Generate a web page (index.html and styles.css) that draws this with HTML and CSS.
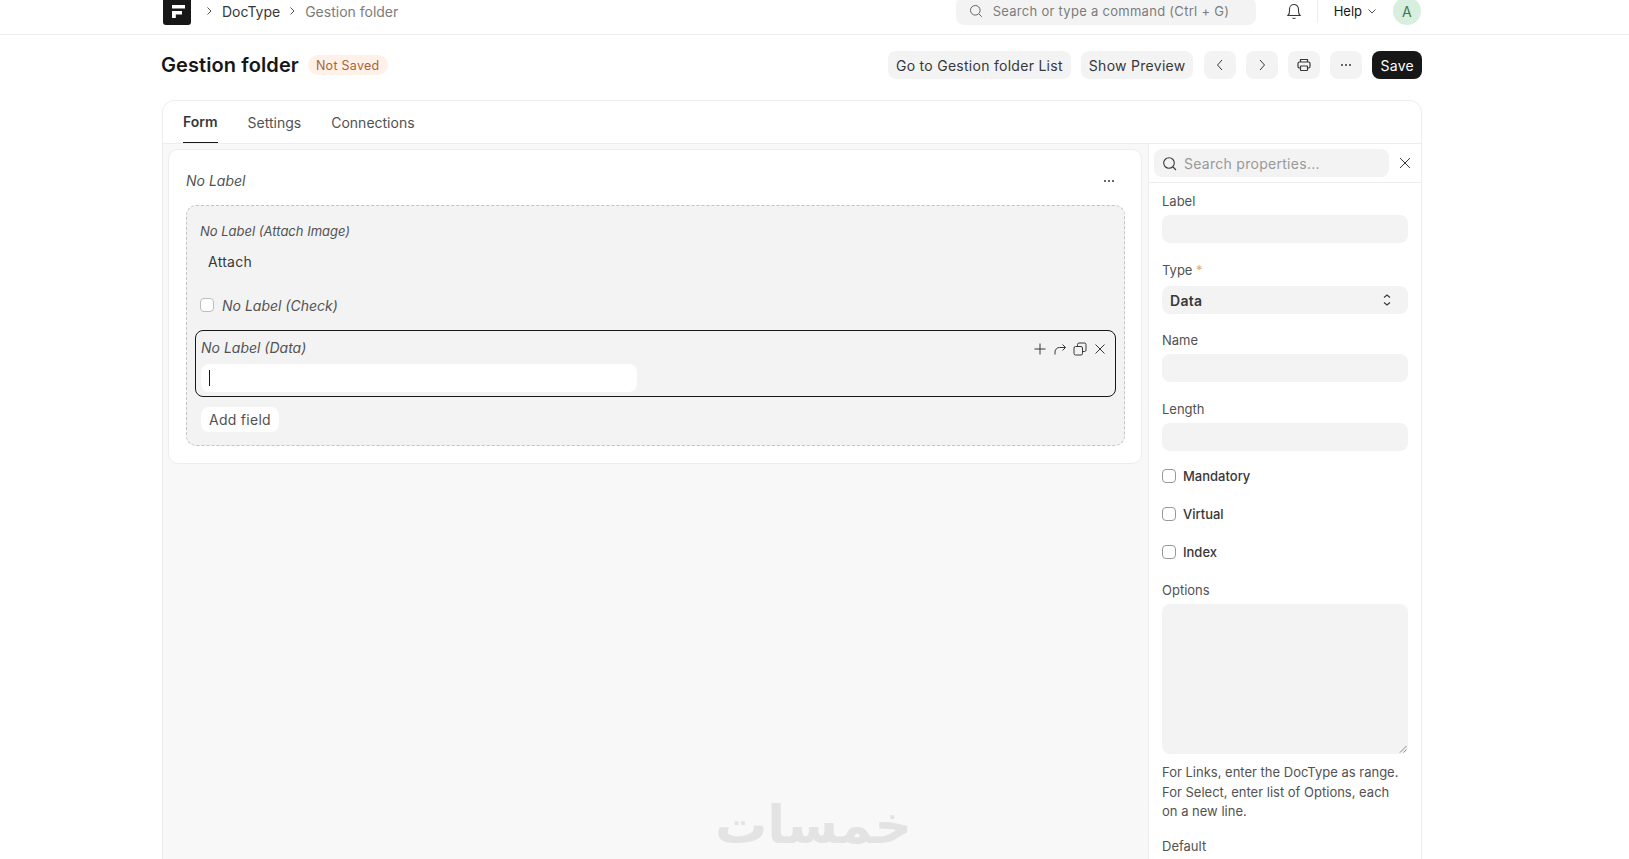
FILE: index.html
```html
<!DOCTYPE html>
<html lang="en">
<head>
  <meta charset="UTF-8">
  <title>Gestion folder</title>
  <link rel="stylesheet" href="styles.css">
</head>
<body>
  <!-- Top bar -->
  <header class="navbar">
    <div class="brand">
      <svg width="28" height="28" viewBox="0 0 28 28"><rect width="28" height="28" rx="3" fill="#171717"/><path d="M9 8h13v3.500H9zM9 14h10v3.500h-6.200V21H9z" fill="#fff"/></svg>
    </div>
    <nav class="crumbs">
      <svg class="crumb-sep" width="12" height="12" viewBox="0 0 12 12"><path d="M4.500 2.500 8 6l-3.500 3.500" fill="none" stroke="#525252"/></svg>
      <span class="crumb">DocType</span>
      <svg class="crumb-sep" width="12" height="12" viewBox="0 0 12 12"><path d="M4.500 2.500 8 6l-3.500 3.500" fill="none" stroke="#525252"/></svg>
      <span class="crumb crumb-current">Gestion folder</span>
    </nav>
    <div class="nav-right">
      <div class="nav-search">
        <svg width="14" height="14" viewBox="0 0 14 14" fill="none" stroke="#666"><circle cx="6.300" cy="6.300" r="4.800"/><path d="m10 10 2.800 2.800"/></svg>
        <span>Search or type a command (Ctrl + G)</span>
      </div>
      <svg class="bell" width="16" height="18" viewBox="0 0 16 18" fill="none" stroke="#383838" stroke-width="1.100"><path d="M2 13.500c1-1 1.500-2 1.500-4.500V7a4.500 4.500 0 0 1 9 0v2c0 2.500.5 3.500 1.500 4.500z"/><path d="M6.500 15.800c.8.700 2.200.7 3 0"/></svg>
      <span class="nav-divider"></span>
      <span class="help">Help</span>
      <svg class="help-caret" width="10" height="10" viewBox="0 0 10 10"><path d="m1.500 3.500 3.500 3.500 3.500-3.500" fill="none" stroke="#525252"/></svg>
      <div class="avatar">A</div>
    </div>
  </header>

  <main class="page">
    <!-- Title row -->
    <div class="page-head">
      <h1>Gestion folder</h1>
      <span class="badge">Not Saved</span>
      <div class="actions">
        <button class="btn">Go to Gestion folder List</button>
        <button class="btn btn-preview">Show Preview</button>
        <button class="btn btn-icon"><svg width="12" height="14" viewBox="0 0 12 14"><path d="M8 2 3.500 7 8 12" fill="none" stroke="#383838"/></svg></button>
        <button class="btn btn-icon"><svg width="12" height="14" viewBox="0 0 12 14"><path d="M4 2l4.500 5L4 12" fill="none" stroke="#383838"/></svg></button>
        <button class="btn btn-icon"><svg width="16" height="16" viewBox="0 0 16 16" fill="none" stroke="#383838" stroke-width="1.200"><path d="M4.500 5V2.500h7V5"/><rect x="2" y="5" width="12" height="6" rx="1.500"/><rect x="4.500" y="9" width="7" height="4.500" rx=".5" fill="#f3f3f3"/></svg></button>
        <button class="btn btn-icon"><svg width="12" height="4" viewBox="0 0 12 4" fill="#383838"><circle cx="2" cy="2" r="1"/><circle cx="6" cy="2" r="1"/><circle cx="10" cy="2" r="1"/></svg></button>
        <button class="btn btn-primary">Save</button>
      </div>
    </div>

    <div class="layout-card">
      <div class="tabs">
        <span class="tab tab-active">Form</span>
        <span class="tab">Settings</span>
        <span class="tab">Connections</span>
      </div>

      <div class="builder">
        <!-- Form canvas -->
        <section class="canvas">
          <div class="form-card">
            <div class="section-head">
              <span class="section-title">No Label</span>
              <svg width="12" height="4" viewBox="0 0 12 4" fill="#383838"><circle cx="2" cy="2" r="1"/><circle cx="6" cy="2" r="1"/><circle cx="10" cy="2" r="1"/></svg>
            </div>
            <div class="column">
              <div class="cf-label cf-attach-label">No Label (Attach Image)</div>
              <div class="cf-attach">Attach</div>
              <label class="cf-check"><span class="checkbox"></span><span class="cf-label-lg">No Label (Check)</span></label>
              <div class="cf-selected">
                <div class="cf-selected-head">
                  <span class="cf-label-lg">No Label (Data)</span>
                  <div class="cf-tools">
                    <svg width="14" height="14" viewBox="0 0 14 14" fill="none" stroke="#383838"><path d="M7 1.500v11M1.500 7h11"/></svg>
                    <svg width="14" height="14" viewBox="0 0 14 14" fill="none" stroke="#383838"><path d="M2 12.500V10a4.500 4.500 0 0 1 4.500-4.500H12.500M9.500 2.500l3 3-3 3"/></svg>
                    <svg width="14" height="14" viewBox="0 0 14 14" fill="none" stroke="#383838"><rect x="1" y="4.500" width="8.500" height="8.500" rx="1.500"/><path d="M4.500 4.500V2.500A1.500 1.500 0 0 1 6 1h6a1.500 1.500 0 0 1 1 1.500V8a1.500 1.500 0 0 1-1.500 1.500h-2"/></svg>
                    <svg width="14" height="14" viewBox="0 0 14 14" fill="none" stroke="#383838"><path d="m2.500 2.500 9 9m0-9-9 9"/></svg>
                  </div>
                </div>
                <div class="cf-input"><span class="caret"></span></div>
              </div>
              <button class="add-field">Add field</button>
            </div>
          </div>
        </section>

        <!-- Properties sidebar -->
        <aside class="sidebar">
          <div class="side-search">
            <div class="side-search-box">
              <svg width="15" height="15" viewBox="0 0 15 15" fill="none" stroke="#383838" stroke-width="1.100"><circle cx="7" cy="7" r="5.300"/><path d="m11 11 3 3"/></svg>
              <span>Search properties...</span>
            </div>
            <svg class="side-close" width="14" height="14" viewBox="0 0 14 14" fill="none" stroke="#383838"><path d="m2 2 10 10m0-10L2 12"/></svg>
          </div>
          <div class="props">
            <div class="field field-first">
              <div class="field-label">Label</div>
              <div class="input"></div>
            </div>
            <div class="field field-type">
              <div class="field-label">Type <span class="req">*</span></div>
              <div class="input select">
                <span>Data</span>
                <svg width="10" height="14" viewBox="0 0 10 14" fill="none" stroke="#383838" stroke-width="1.100"><path d="M2 4.500 5 2l3 2.500M2 9.500 5 12l3-2.500"/></svg>
              </div>
            </div>
            <div class="field">
              <div class="field-label">Name</div>
              <div class="input"></div>
            </div>
            <div class="field field-length">
              <div class="field-label">Length</div>
              <div class="input"></div>
            </div>
            <div class="checks">
              <label class="check"><span class="checkbox"></span>Mandatory</label>
              <label class="check"><span class="checkbox"></span>Virtual</label>
              <label class="check"><span class="checkbox"></span>Index</label>
            </div>
            <div class="field field-options">
              <div class="field-label">Options</div>
              <div class="input textarea">
                <svg class="grip" width="8" height="8" viewBox="0 0 8 8" stroke="#8a8a8a"><path d="M7.500 1 1 7.500M7.500 4.500 4.500 7.500"/></svg>
              </div>
              <p class="help-text">For Links, enter the DocType as range. For Select, enter list of Options, each on a new line.</p>
            </div>
            <div class="field field-default">
              <div class="field-label">Default</div>
            </div>
          </div>
        </aside>
      </div>
    </div>
  </main>

  <div class="watermark" lang="ar" dir="rtl">خمسات</div>
</body>
</html>
```

FILE: styles.css
```css
/* Reset & base */
*, *::before, *::after {
  box-sizing: border-box;
}
html, body {
  margin: 0;
  padding: 0;
  height: 100%;
  overflow: hidden;
}
body {
  position: relative;
  font-family: Inter, "Noto Sans", sans-serif;
  font-size: 14px;
  letter-spacing: 0.02em;
  color: #383838;
  background: #fff;
}
button {
  font: inherit;
  letter-spacing: inherit;
  border: 0;
  cursor: pointer;
}

/* Top bar */
.navbar {
  display: flex;
  align-items: flex-end;
  height: 35px;
  padding: 0 208px 9px 163px;
  border-bottom: 1px solid #ededed;
  overflow: hidden;
}
.brand {
  height: 28px;
  flex: none;
}
.crumbs {
  display: flex;
  align-items: center;
  height: 28px;
  margin-left: 12px;
  letter-spacing: 0;
}
.crumb-sep {
  margin-right: 7px;
}
.crumb {
  margin-right: 6px;
  color: #383838;
}
.crumb-current {
  color: #7c7c7c;
}
.nav-right {
  display: flex;
  align-items: center;
  height: 28px;
  margin-left: auto;
}
.nav-search {
  display: flex;
  align-items: center;
  gap: 10px;
  width: 300px;
  height: 28px;
  padding-left: 13px;
  border-radius: 8px;
  background: #f3f3f3;
  font-size: 13px;
  color: #7c7c7c;
}
.bell {
  margin-left: 30px;
}
.nav-divider {
  width: 1px;
  height: 24px;
  margin-left: 15px;
  background: #ededed;
}
.help {
  margin-left: 16px;
  font-size: 13px;
  letter-spacing: 0;
  color: #171717;
}
.help-caret {
  margin-left: 5px;
}
.avatar {
  display: flex;
  align-items: center;
  justify-content: center;
  width: 28px;
  height: 28px;
  margin-left: 16px;
  border-radius: 50%;
  background: #d8efdf;
  color: #3d7a55;
  font-size: 14px;
}

/* Page */
.page {
  padding: 0 207px 0 162px;
}
.page-head {
  display: flex;
  align-items: center;
  height: 28px;
  margin-top: 16px;
}
.page-head h1 {
  margin: 0 0 0 -1px;
  font-size: 20px;
  font-weight: 600;
  letter-spacing: 0.005em;
  color: #171717;
}
.badge {
  margin-left: 9px;
  padding: 1px 8px 0;
  height: 20px;
  line-height: 19px;
  border-radius: 10px;
  background: #fff1e7;
  color: #a8643a;
  font-size: 12.500px;
}
.actions {
  display: flex;
  gap: 10px;
  margin-left: auto;
}
.btn {
  height: 28px;
  padding: 0 8px;
  border-radius: 8px;
  background: #f3f3f3;
  color: #383838;
}
.btn-preview {
  margin-right: 1px;
}
.btn-icon {
  display: flex;
  align-items: center;
  justify-content: center;
  width: 32px;
  padding: 0;
}
.btn-primary {
  background: #171717;
  color: #fff;
}

/* Card */
.layout-card {
  margin-top: 21px;
  height: 900px;
  border: 1px solid #ededed;
  border-radius: 12px;
  overflow: hidden;
}
.tabs {
  display: flex;
  gap: 30px;
  height: 43px;
  padding-left: 20px;
  border-bottom: 1px solid #ededed;
  letter-spacing: 0;
}
.tab {
  display: flex;
  align-items: center;
  height: 42px;
  color: #525252;
}
.tab-active {
  font-weight: 600;
  color: #383838;
  border-bottom: 1px solid #171717;
}

/* Form canvas */
.builder {
  display: flex;
  height: 100%;
}
.canvas {
  flex: 1;
  padding: 5px 6px 0 5px;
  background: #f8f8f8;
}
.form-card {
  height: 315px;
  padding: 0 16px 0 17px;
  border: 1px solid #ededed;
  border-radius: 10px;
  background: #fff;
}
.section-head {
  display: flex;
  align-items: center;
  justify-content: space-between;
  height: 55px;
  padding: 6px 10px 0 0;
}
.section-title {
  font-style: italic;
  letter-spacing: 0;
  color: #525252;
}
.column {
  height: 241px;
  padding: 0 8px;
  border: 1px dashed #c4c4c4;
  border-radius: 10px;
  background: #f3f3f3;
}
.cf-label {
  font-size: 13px;
  font-style: italic;
  line-height: 16px;
  letter-spacing: 0;
  color: #525252;
}
.cf-attach-label {
  padding: 17px 0 0 5px;
  height: 33px;
}
.cf-attach {
  height: 28px;
  margin-top: 9px;
  padding-left: 13px;
  line-height: 28px;
  color: #383838;
}
.cf-check {
  display: flex;
  align-items: center;
  gap: 8px;
  height: 18px;
  margin-top: 20px;
  padding-left: 5px;
}
.cf-check .checkbox {
  border-color: #bdbdbd;
}
.cf-label-lg {
  font-size: 14px;
  font-style: italic;
  letter-spacing: 0;
  color: #525252;
}
.cf-selected {
  height: 67px;
  margin-top: 16px;
  padding: 0 5px;
  border: 1.500px solid #171717;
  border-radius: 8px;
}
.cf-selected-head {
  display: flex;
  align-items: center;
  justify-content: space-between;
  height: 33px;
  padding: 0 1px 0 0;
}
.cf-tools {
  display: flex;
  gap: 6px;
  padding-top: 3px;
  padding-right: 2px;
}
.cf-input {
  display: flex;
  align-items: center;
  width: 436px;
  height: 28px;
  padding-left: 8px;
  border-radius: 8px;
  background: #fff;
}
.caret {
  width: 1px;
  height: 16px;
  background: #171717;
}
.add-field {
  display: block;
  height: 25px;
  margin: 10px 0 0 6px;
  padding: 0 8px;
  border-radius: 8px;
  background: #fff;
  color: #525252;
}

/* Properties sidebar */
.sidebar {
  flex: none;
  width: 273px;
  border-left: 1px solid #ededed;
  background: #fff;
}
.side-search {
  display: flex;
  align-items: center;
  height: 39px;
  padding: 0 0 0 5px;
  border-bottom: 1px solid #ededed;
}
.side-search-box {
  display: flex;
  align-items: center;
  gap: 7px;
  width: 235px;
  height: 28px;
  padding-left: 8px;
  border-radius: 8px;
  background: #f3f3f3;
  color: #999;
}
.side-close {
  margin-left: 9px;
}
.props {
  padding: 0 13px 0 13px;
}
.field {
  margin-top: 18px;
}
.field-first {
  margin-top: 10px;
}
.field-type {
  margin-top: 17px;
}
.field-type .field-label {
  margin-bottom: 8px;
  padding-top: 2px;
  height: 18px;
}
.field-length {
  margin-top: 19px;
}
.field-label {
  height: 16px;
  margin-bottom: 6px;
  font-size: 13px;
  line-height: 16px;
  letter-spacing: 0;
  color: #525252;
}
.req {
  color: #e9a86c;
}
.input {
  height: 28px;
  border-radius: 8px;
  background: #f3f3f3;
}
.select {
  display: flex;
  align-items: center;
  justify-content: space-between;
  padding: 0 16px 0 8px;
  font-weight: 600;
  color: #383838;
}
.checks {
  display: flex;
  flex-direction: column;
  gap: 20px;
  margin-top: 16px;
}
.check {
  display: flex;
  align-items: center;
  gap: 7px;
  height: 18px;
  font-size: 13px;
  font-weight: 500;
  letter-spacing: 0;
  color: #383838;
}
.checkbox {
  flex: none;
  width: 14px;
  height: 14px;
  border: 1px solid #999;
  border-radius: 4px;
  background: #fff;
}
.field-options {
  margin-top: 21px;
}
.textarea {
  position: relative;
  height: 150px;
}
.grip {
  position: absolute;
  right: 1px;
  bottom: 1px;
}
.help-text {
  margin: 9px 0 0;
  font-size: 13px;
  line-height: 19.500px;
  letter-spacing: 0;
  color: #525252;
}
.field-default {
  margin-top: 16px;
}

/* Watermark over the page */
.watermark {
  position: absolute;
  left: 717px;
  top: 795px;
  width: 195px;
  font-family: "DejaVu Sans", sans-serif;
  font-size: 52px;
  font-weight: 700;
  line-height: 60px;
  letter-spacing: 0;
  text-align: center;
  color: #e3e3e3;
  pointer-events: none;
}
```
